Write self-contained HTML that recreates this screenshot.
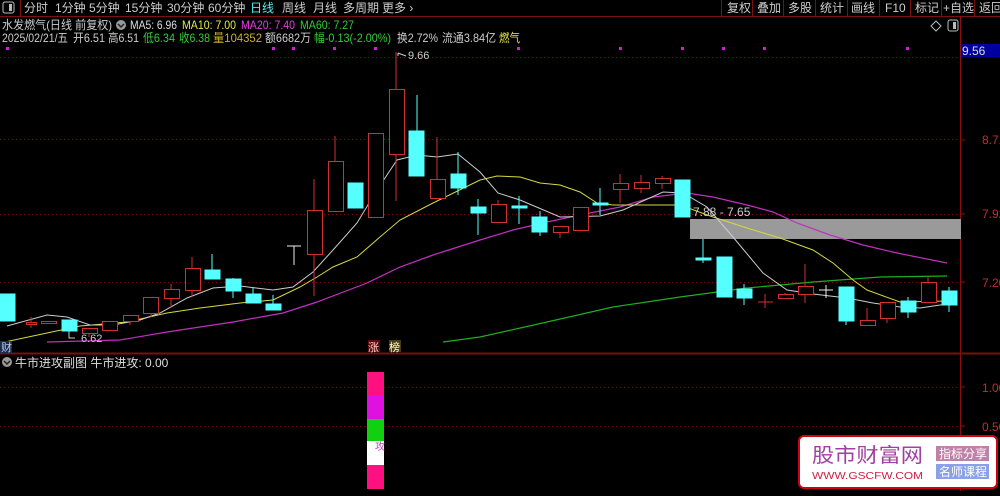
<!DOCTYPE html><html><head><meta charset="utf-8"><style>
body{margin:0;background:#000;width:1000px;height:491px;overflow:hidden;font-family:"Liberation Sans","Noto Sans CJK SC",sans-serif}
svg text{font-family:"Liberation Sans","Noto Sans CJK SC",sans-serif}
</style></head><body>
<svg width="1000" height="491" viewBox="0 0 1000 491" xmlns="http://www.w3.org/2000/svg">
<rect width="1000" height="491" fill="#000"/>
<!-- top bar -->
<line x1="0" y1="16.5" x2="1000" y2="16.5" stroke="#7a1010"/>
<line x1="20.5" y1="0" x2="20.5" y2="16" stroke="#7a1010"/>
<rect x="3" y="2" width="11" height="11" rx="2" fill="none" stroke="#bbb"/><rect x="9" y="4" width="3" height="7" fill="#bbb"/>
<g font-size="12" fill="#ccc">
<text x="24" y="12">分时</text><text x="55" y="12">1分钟</text><text x="89" y="12">5分钟</text><text x="125" y="12">15分钟</text><text x="167" y="12">30分钟</text><text x="208" y="12">60分钟</text><text x="250" y="12" fill="#5ee">日线</text><text x="282" y="12">周线</text><text x="313" y="12">月线</text><text x="343" y="12">多周期</text><text x="382" y="12">更多 ›</text>
<text x="727" y="12">复权</text><text x="757" y="12">叠加</text><text x="788" y="12">多股</text><text x="820" y="12">统计</text><text x="851" y="12">画线</text><text x="885" y="12">F10</text><text x="915" y="12">标记</text><text x="943" y="12">+自选</text><text x="979" y="12">返回</text>
</g>
<g stroke="#7a1010"><line x1="721.5" y1="0" x2="721.5" y2="16"/><line x1="752.5" y1="0" x2="752.5" y2="16"/><line x1="783.5" y1="0" x2="783.5" y2="16"/><line x1="815.5" y1="0" x2="815.5" y2="16"/><line x1="847.5" y1="0" x2="847.5" y2="16"/><line x1="879.5" y1="0" x2="879.5" y2="16"/><line x1="910.5" y1="0" x2="910.5" y2="16"/><line x1="941.5" y1="0" x2="941.5" y2="16"/><line x1="974.5" y1="0" x2="974.5" y2="16"/></g>
<!-- info -->
<g font-size="12" lengthAdjust="spacingAndGlyphs">
<text x="2" y="29" fill="#ccc" textLength="110" lengthAdjust="spacingAndGlyphs">水发燃气(日线 前复权)</text>
<circle cx="121" cy="25" r="5" fill="#999"/><path d="M118 24l3 3 3-3" stroke="#222" fill="none" stroke-width="1.5"/>
<text x="130" y="29" fill="#ddd" textLength="47" lengthAdjust="spacingAndGlyphs">MA5: 6.96</text>
<text x="182" y="29" fill="#e6e64a" textLength="54" lengthAdjust="spacingAndGlyphs">MA10: 7.00</text>
<text x="241" y="29" fill="#e040e0" textLength="54" lengthAdjust="spacingAndGlyphs">MA20: 7.40</text>
<text x="300" y="29" fill="#3c3" textLength="54" lengthAdjust="spacingAndGlyphs">MA60: 7.27</text>
<text x="2" y="42" fill="#ccc" textLength="66" lengthAdjust="spacingAndGlyphs">2025/02/21/五</text>
<text x="73" y="42" fill="#ccc" textLength="32" lengthAdjust="spacingAndGlyphs">开6.51</text>
<text x="108" y="42" fill="#ccc" textLength="31" lengthAdjust="spacingAndGlyphs">高6.51</text>
<text x="143" y="42" fill="#3c3" textLength="32" lengthAdjust="spacingAndGlyphs">低6.34</text>
<text x="179" y="42" fill="#3c3" textLength="31" lengthAdjust="spacingAndGlyphs">收6.38</text>
<text x="213" y="42" fill="#c8b030" textLength="49" lengthAdjust="spacingAndGlyphs">量104352</text>
<text x="265" y="42" fill="#ccc" textLength="46" lengthAdjust="spacingAndGlyphs">额6682万</text>
<text x="314" y="42" fill="#3c3" textLength="77" lengthAdjust="spacingAndGlyphs">幅-0.13(-2.00%)</text>
<text x="397" y="42" fill="#ccc" textLength="41" lengthAdjust="spacingAndGlyphs">换2.72%</text>
<text x="442" y="42" fill="#ccc" textLength="54" lengthAdjust="spacingAndGlyphs">流通3.84亿</text>
<text x="499" y="42" fill="#e6e64a" textLength="21" lengthAdjust="spacingAndGlyphs">燃气</text>
</g>
<path d="M936 21l5 5-5 5-5-5z" fill="none" stroke="#bbb"/><rect x="948" y="20" width="10" height="11" rx="2" fill="none" stroke="#bbb"/><rect x="953" y="22" width="3" height="7" fill="#bbb"/>
<g fill="#d020d0"><rect x="6" y="47" width="3" height="3"/><rect x="272" y="47" width="3" height="3"/><rect x="292" y="47" width="3" height="3"/><rect x="333" y="47" width="3" height="3"/><rect x="374" y="47" width="3" height="3"/><rect x="517" y="47" width="3" height="3"/><rect x="619" y="47" width="3" height="3"/><rect x="681" y="47" width="3" height="3"/><rect x="722" y="47" width="3" height="3"/><rect x="763" y="47" width="3" height="3"/><rect x="906" y="47" width="3" height="3"/></g>
<!-- grid -->
<g stroke="#701010" stroke-dasharray="1,3"><line x1="0" y1="57.5" x2="960" y2="57.5"/><line x1="0" y1="139.5" x2="960" y2="139.5"/><line x1="0" y1="214.5" x2="960" y2="214.5"/><line x1="0" y1="282.5" x2="960" y2="282.5"/><line x1="0" y1="387.5" x2="960" y2="387.5"/><line x1="0" y1="426.5" x2="960" y2="426.5"/></g>
<line x1="960.5" y1="17" x2="960.5" y2="491" stroke="#8a1010"/>
<line x1="0" y1="353.5" x2="1000" y2="353.5" stroke="#7a1010" stroke-width="2"/>
<g stroke="#8a1010"><line x1="960" y1="140" x2="965" y2="140"/><line x1="960" y1="214" x2="965" y2="214"/><line x1="960" y1="282" x2="965" y2="282"/><line x1="960" y1="387" x2="965" y2="387"/><line x1="960" y1="426" x2="965" y2="426"/></g>
<rect x="961" y="44" width="39" height="13" fill="#0000a0"/>
<text x="962" y="55" font-size="12" fill="#ddd">9.56</text>
<g font-size="12" fill="#c03030"><text x="982" y="144">8.71</text><text x="982" y="218">7.92</text><text x="982" y="287">7.20</text><text x="982" y="392">1.00</text><text x="982" y="431">0.50</text></g>
<!-- band -->
<rect x="690" y="219" width="271" height="20" fill="#9a9a9a"/>
<text x="693" y="216" font-size="12" fill="#ccc">7.88 - 7.65</text>
<!-- MAs -->
<polyline fill="none" stroke="#1fae1f" stroke-width="1.2" points="443,342 480,337 547,322 613,307 680,297 747,288 813,282 880,277 947,276"/>
<polyline fill="none" stroke="#c030c0" stroke-width="1.2" points="47,342 120,340 167,332 233,322 283,313 317,302 367,283 400,267 433,255 480,240 513,230 547,222 580,215 620,207 653,197 687,193 713,197 747,205 773,212 797,223 830,235 863,245 897,253 947,263"/>
<polyline fill="none" stroke="#d8d840" stroke-width="1" points="0,343 47,333 80,326 127,322 167,313 200,308 240,303 273,300 300,287 317,277 333,267 357,257 380,237 400,220 433,203 480,180 497,176 520,177 540,183 560,185 580,192 597,203 613,205 640,205 680,205 713,217 747,228 780,238 813,250 833,263 853,280 867,290 900,302 947,301"/>
<polyline fill="none" stroke="#ccc" stroke-width="1" points="7,326 47,315 67,317 90,325 113,325 140,320 160,313 187,298 213,288 240,286 273,290 293,287 313,272 333,250 357,223 377,190 397,160 417,155 437,157 458,154 480,172 498,193 520,200 560,217 600,216 623,210 663,192 683,193 707,207 733,237 763,273 787,290 813,294 847,298 873,303 900,307 920,308 947,304"/>
<!-- candles: red hollow -->
<g stroke="#d03030" fill="#000" stroke-width="1">
<path d="M31 317v11M89 328v9M130 315v10M151 313v4M171 284v24M192 257v40M314 179v117M335 136v25M396 52v149M437 137v42M498 200v4M560 232v6M620 174v29M641 175v18M662 176v13M765 294v14M785 293v1M805 264v39M867 308v12M887 318v5M928 277v5"/>
<rect x="26.5" y="322.5" width="10" height="2"/><rect x="41.5" y="321.5" width="15" height="2"/><rect x="82.5" y="328.5" width="15" height="5"/><rect x="102.5" y="321.5" width="15" height="9"/><rect x="123.5" y="315.5" width="15" height="6"/><rect x="143.5" y="297.5" width="15" height="16"/><rect x="164.5" y="289.5" width="15" height="9"/><rect x="185.5" y="268.5" width="15" height="22"/><rect x="307.5" y="210.5" width="15" height="44"/><rect x="328.5" y="161.5" width="15" height="50"/><rect x="368.5" y="133.5" width="15" height="84"/><rect x="389.5" y="89.5" width="15" height="65"/><rect x="430.5" y="179.5" width="15" height="19"/><rect x="491.5" y="204.5" width="15" height="18"/><rect x="553.5" y="226.5" width="15" height="6"/><rect x="573.5" y="207.5" width="15" height="23"/><rect x="613.5" y="183.5" width="15" height="6"/><rect x="634.5" y="182.5" width="15" height="6"/><rect x="655.5" y="178.5" width="15" height="5"/><line x1="758" y1="302" x2="773" y2="302"/><rect x="778.5" y="294.5" width="15" height="4"/><rect x="798.5" y="286.5" width="15" height="8"/><rect x="860.5" y="320.5" width="15" height="5"/><rect x="880.5" y="302.5" width="15" height="16"/><rect x="921.5" y="282.5" width="15" height="20"/>
</g>
<!-- cyan -->
<g fill="#55ffff" stroke="#55ffff">
<path d="M69 331v4M212 254v25M233 278v20M253 287v16M273 295v9M417 95v81M458 152v43M478 199v36M519 196v28M540 211v25M600 188v27M703 239v24M744 284v21M846 321v4M908 297v21M949 287v25" fill="none"/>
<rect x="0" y="294" width="15" height="27"/><rect x="62" y="320" width="15" height="11"/><rect x="205" y="270" width="15" height="9"/><rect x="226" y="279" width="15" height="12"/><rect x="246" y="294" width="15" height="9"/><rect x="266" y="304" width="15" height="6"/><rect x="348" y="183" width="15" height="25"/><rect x="409" y="131" width="15" height="45"/><rect x="451" y="174" width="15" height="14"/><rect x="471" y="207" width="15" height="6"/><rect x="512" y="206" width="15" height="2"/><rect x="532" y="217" width="15" height="15"/><rect x="593" y="203" width="15" height="2"/><rect x="675" y="180" width="15" height="37"/><rect x="696" y="258" width="15" height="2"/><rect x="717" y="257" width="15" height="40"/><rect x="737" y="289" width="15" height="9"/><rect x="839" y="287" width="15" height="34"/><rect x="901" y="301" width="15" height="11"/><rect x="942" y="291" width="15" height="14"/>
</g>
<g stroke="#eee" fill="none"><path d="M287 246h14M294 246v19M819 290h14M826 285v13"/></g>
<path d="M398 53v3M398 53l8 3" stroke="#ccc" fill="none"/><text x="408" y="59" font-size="11" fill="#ccc">9.66</text>
<path d="M69 334v4h6" stroke="#ccc" fill="none"/><text x="81" y="342" font-size="11" fill="#ccc">6.62</text>
<rect x="0" y="341" width="12" height="12" fill="#1a2a50"/><text x="1" y="351" font-size="11" fill="#bcd">财</text>
<rect x="368" y="340" width="12" height="12" fill="#5a0a0a"/><text x="368" y="351" font-size="11" fill="#fcc">涨</text>
<rect x="389" y="340" width="12" height="12" fill="#4a3a10"/><text x="389" y="351" font-size="11" fill="#ffd">榜</text>
<!-- sub -->
<circle cx="7" cy="362" r="5" fill="#999"/><path d="M4 361l3 3 3-3" stroke="#222" fill="none" stroke-width="1.5"/>
<text x="15" y="367" font-size="12" fill="#ddd">牛市进攻副图 牛市进攻: 0.00</text>
<rect x="367" y="372" width="17" height="23" fill="#ff1080"/><rect x="367" y="395" width="17" height="24" fill="#e010e0"/><rect x="367" y="419" width="17" height="22" fill="#10d010"/><rect x="367" y="441" width="17" height="24" fill="#fff"/><rect x="367" y="465" width="17" height="24" fill="#ff1080"/>
<text x="375" y="450" font-size="10" fill="#c040c0">攻</text>
<!-- watermark -->
<rect x="799" y="436" width="198" height="52" rx="5" fill="#fff" stroke="#d00010" stroke-width="2"/>
<text x="812" y="462" font-size="20" fill="#a040a0" font-family="'Noto Serif CJK SC',serif" textLength="111" lengthAdjust="spacingAndGlyphs">股市财富网</text>
<text x="812" y="479" font-size="10" fill="#d02040" font-family="'Liberation Serif',serif" textLength="111" lengthAdjust="spacingAndGlyphs">WWW.GSCFW.COM</text>
<rect x="936" y="446" width="53" height="15" fill="#c080a8"/><text x="939" y="458" font-size="12" fill="#fff">指标分享</text>
<rect x="936" y="464" width="53" height="15" fill="#8aa0e8"/><text x="939" y="476" font-size="12" fill="#fff">名师课程</text>
</svg>
</body></html>
